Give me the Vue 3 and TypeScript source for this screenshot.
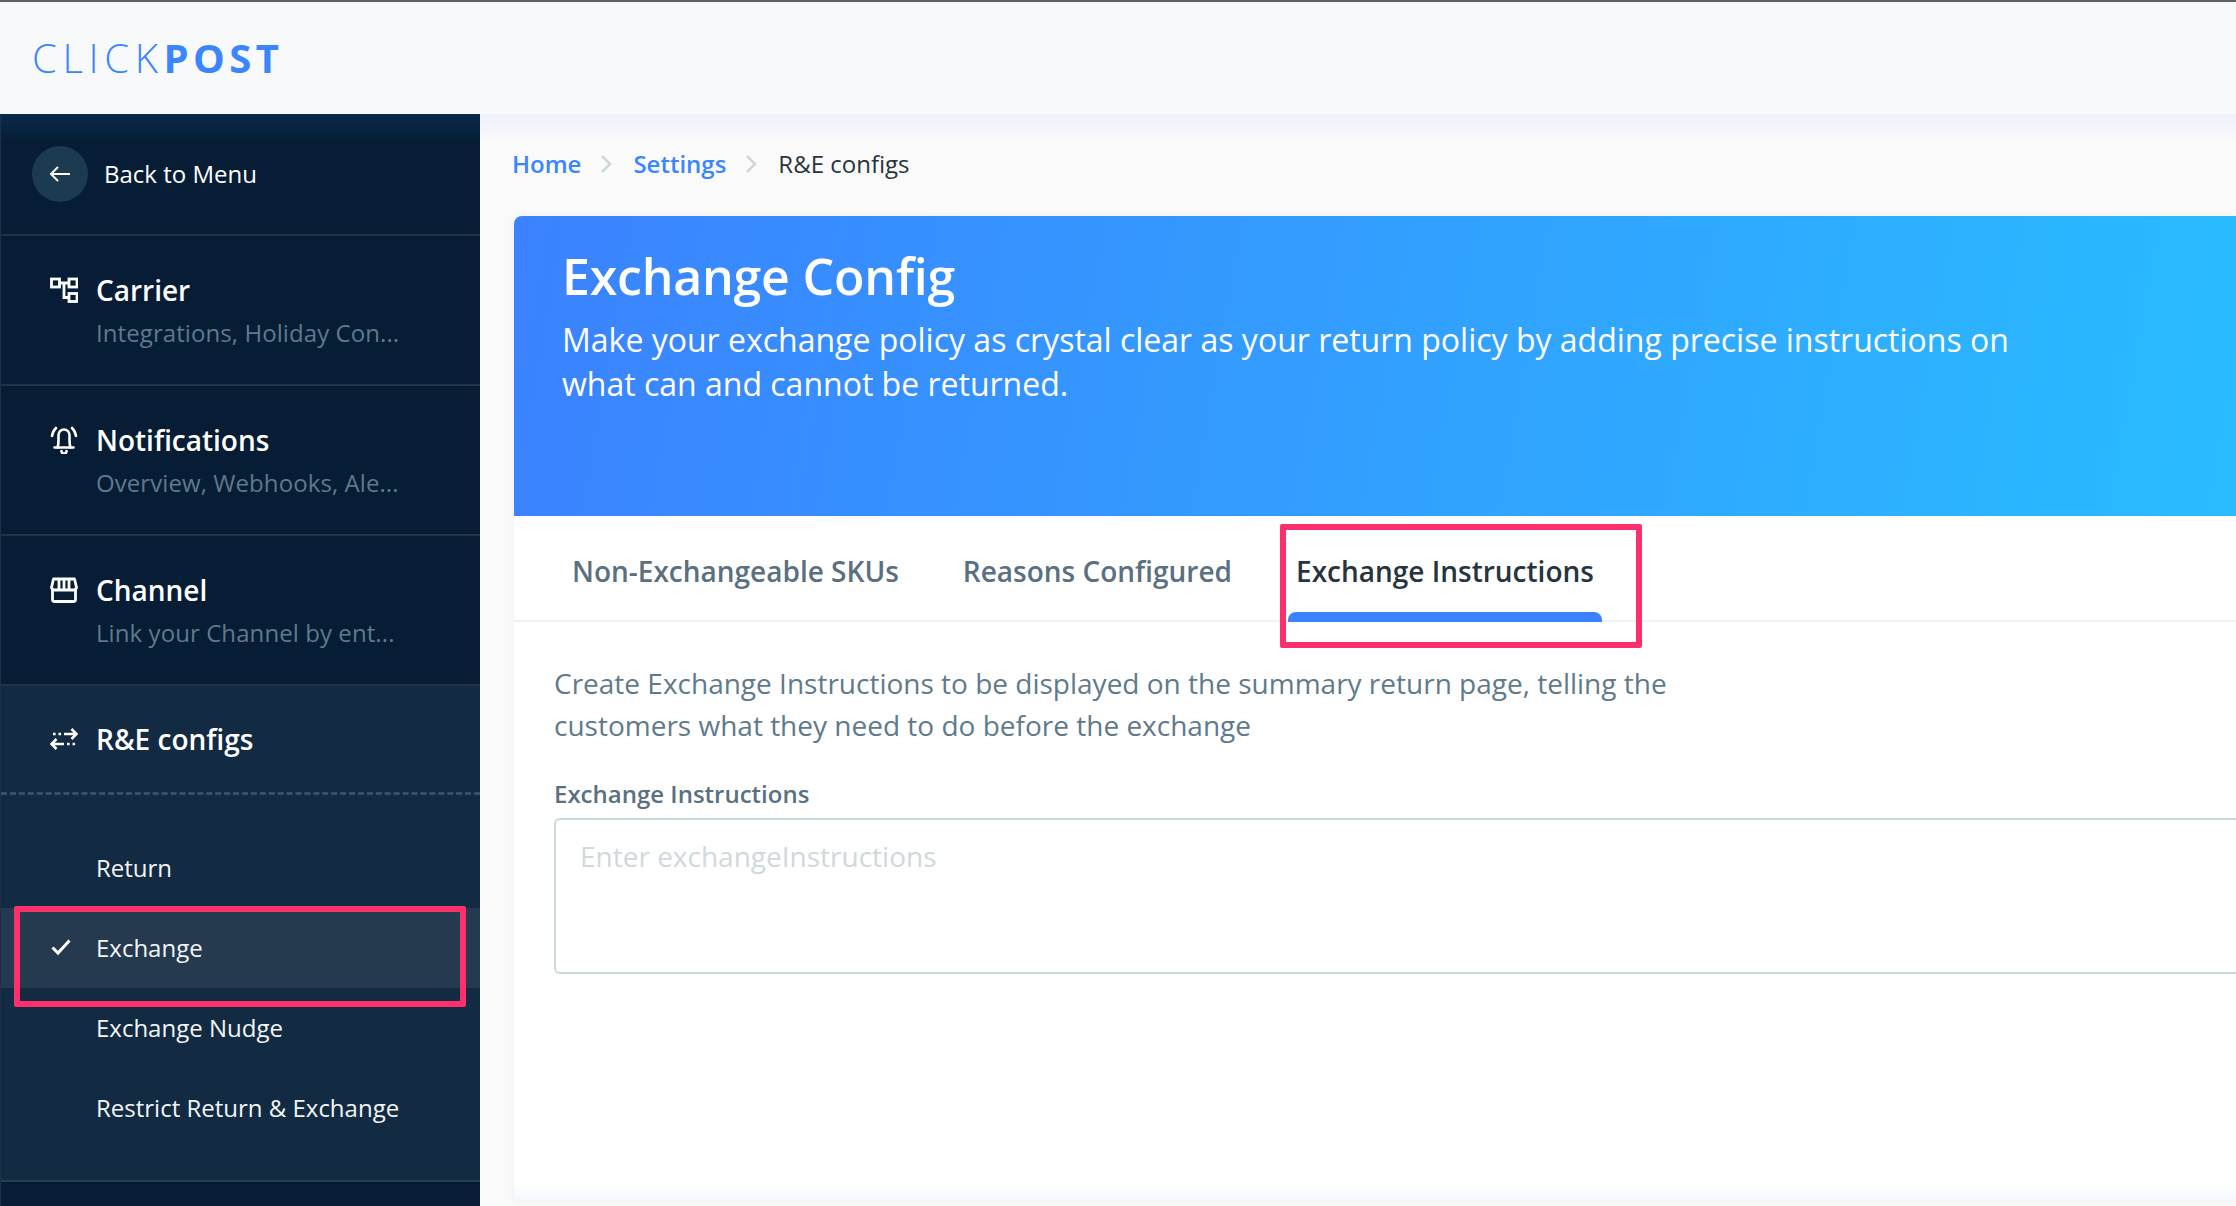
<script setup lang="ts">
interface NavItem { key: string; title: string; sub: string }
const navItems: NavItem[] = [
  { key: 'carrier', title: 'Carrier', sub: 'Integrations, Holiday Con...' },
  { key: 'bell', title: 'Notifications', sub: 'Overview, Webhooks, Ale...' },
  { key: 'store', title: 'Channel', sub: 'Link your Channel by ent...' },
]
const subItems = [
  { label: 'Return', active: false },
  { label: 'Exchange', active: true },
  { label: 'Exchange Nudge', active: false },
  { label: 'Restrict Return & Exchange', active: false },
]
const tabs = [
  { label: 'Non-Exchangeable SKUs', active: false },
  { label: 'Reasons Configured', active: false },
  { label: 'Exchange Instructions', active: true },
]
</script>

<template>
  <div class="page">
    <header class="topbar">
      <div class="logo"><span class="logo-light">CLICK</span><span class="logo-bold">POST</span></div>
    </header>
    <div class="body">
      <aside class="sidebar">
        <div class="back">
          <span class="back-circle">
            <svg width="24" height="24" viewBox="0 0 24 24" fill="none" stroke="#fff" stroke-width="2">
              <path d="M22 12H3M10 5l-7 7 7 7" />
            </svg>
          </span>
          <span class="back-label">Back to Menu</span>
        </div>
        <div v-for="item in navItems" :key="item.key" class="nav">
          <span class="nav-icon">
            <svg v-if="item.key === 'carrier'" width="28" height="26" viewBox="0 0 28 26" fill="none" stroke="#fff" stroke-width="2.8">
              <rect x="1.500" y="2" width="8" height="8" />
              <rect x="19" y="2" width="8" height="8" />
              <rect x="19" y="16.500" width="8" height="8" />
              <path d="M9.500 6H19M14 6v14.500h5" />
            </svg>
            <svg v-else-if="item.key === 'bell'" width="28" height="28" viewBox="0 0 28 28" fill="none" stroke="#fff" stroke-width="2.600" stroke-linecap="round" stroke-linejoin="round">
              <path d="M7.500 21.500c.8-2 1-4 1-7.500V9a5.500 5.500 0 0 1 11 0V14c0 3.500.2 5.500 1 7.500" />
              <path d="M4.500 21.500h19" />
              <path d="M11.500 25a2.500 2.500 0 0 0 5 0" />
              <path d="M6 2C3.800 4 2.600 6.800 2 10M22 2c2.200 2 3.400 4.800 4 8" />
            </svg>
            <svg v-else width="28" height="26" viewBox="0 0 28 26" fill="none" stroke="#fff" stroke-width="2.800" stroke-linejoin="round">
              <path d="M3.500 2h21l2 8.500a3 3 0 0 1-3 2.500h-19a3 3 0 0 1-3-2.500z" />
              <path d="M9 2.500V12M14 2.500V12M19 2.500V12" />
              <path d="M2.500 11v11.500a2 2 0 0 0 2 2h19a2 2 0 0 0 2-2V11" />
            </svg>
          </span>
          <div class="nav-text">
            <div class="nav-title">{{ item.title }}</div>
            <div class="nav-sub">{{ item.sub }}</div>
          </div>
        </div>
        <div class="group">
          <div class="group-head">
            <span class="nav-icon group-icon">
              <svg width="28" height="24" viewBox="0 0 28 24" fill="none" stroke="#fff" stroke-width="2.600">
                <path d="M14 7h12M21.500 2l5 5-5 5" />
                <path d="M3 7h2.600M8.500 7h2.600" />
                <path d="M14 17H2M6.500 12l-5 5 5 5" />
                <path d="M17 17h2.600M22.500 17h2.600" />
              </svg>
            </span>
            <span class="nav-title">R&amp;E configs</span>
          </div>
          <div class="sublist">
            <div v-for="sub in subItems" :key="sub.label" class="sub" :class="{ 'sub-active': sub.active }">
              <svg v-if="sub.active" class="check" width="20" height="18" viewBox="0 0 20 18" fill="none" stroke="#fff" stroke-width="3">
                <path d="M1.500 9.500l5.500 5.500L18.500 2.500" />
              </svg>
              <span>{{ sub.label }}</span>
            </div>
          </div>
        </div>
        <div class="mark mark-side"></div>
      </aside>
      <main class="main">
        <nav class="crumbs">
          <a class="crumb-link">Home</a>
          <svg class="chev" width="12" height="20" viewBox="0 0 12 20" fill="none" stroke="#ccd8d8" stroke-width="2.500"><path d="M2 2l8 8-8 8" /></svg>
          <a class="crumb-link">Settings</a>
          <svg class="chev" width="12" height="20" viewBox="0 0 12 20" fill="none" stroke="#ccd8d8" stroke-width="2.500"><path d="M2 2l8 8-8 8" /></svg>
          <span class="crumb-now">R&amp;E configs</span>
        </nav>
        <section class="card">
          <div class="hero">
            <h1 class="hero-title">Exchange Config</h1>
            <p class="hero-text">Make your exchange policy as crystal clear as your return policy by adding precise instructions on what can and cannot be returned.</p>
          </div>
          <div class="tabs">
            <div v-for="tab in tabs" :key="tab.label" class="tab" :class="{ 'tab-active': tab.active }">
              {{ tab.label }}
              <span v-if="tab.active" class="tab-bar"></span>
              <span v-if="tab.active" class="mark mark-tab"></span>
            </div>
          </div>
          <div class="content">
            <p class="desc">Create Exchange Instructions to be displayed on the summary return page, telling the customers what they need to do before the exchange</p>
            <label class="field-label">Exchange Instructions</label>
            <textarea class="field" placeholder="Enter exchangeInstructions"></textarea>
          </div>
        </section>
      </main>
    </div>
  </div>
</template>

<style>
html, body { margin: 0; padding: 0; overflow: hidden; background: #fafafa; }
</style>

<style scoped>
.page {
  width: 2236px;
  height: 1206px;
  display: flex;
  flex-direction: column;
  overflow: hidden;
  font-family: "Open Sans", "Noto Sans", sans-serif;
  background: #fafafa;
}
.topbar {
  height: 114px;
  flex: none;
  box-sizing: border-box;
  border-top: 2px solid #5f6062;
  background: #f8f9fb;
  display: flex;
  align-items: center;
  padding: 0 0 1px 32px;
}
.logo { font-size: 40px; color: #3b86ff; line-height: 1; }
.logo-light { font-weight: 300; letter-spacing: 5.6px; }
.logo-bold { font-weight: 700; letter-spacing: 4.4px; }
.body { flex: 1; display: flex; min-height: 0; }
.sidebar {
  position: relative;
  width: 480px;
  flex: none;
  background: #061d35;
  border-left: 1px solid #1d3046;
  box-sizing: border-box;
  color: #fff;
}
.back {
  height: 122px;
  box-sizing: border-box;
  display: flex;
  align-items: center;
  padding-left: 31px;
  gap: 16px;
  border-bottom: 2px solid #1f3347;
  background: linear-gradient(#0b2a4a 0, #061d35 28px);
}
.back-circle {
  width: 56px;
  height: 56px;
  border-radius: 50%;
  background: #1c3a50;
  display: flex;
  align-items: center;
  justify-content: center;
}
.back-label { font-size: 24px; line-height: 32px; }
.nav {
  height: 150px;
  box-sizing: border-box;
  display: flex;
  padding: 35px 0 0 49px;
  border-bottom: 2px solid #1f3347;
}
.nav-icon { width: 46px; flex: none; display: flex; height: 38px; align-items: center; }
.nav-title { font-size: 28px; font-weight: 600; line-height: 38px; }
.nav-sub { font-size: 24px; line-height: 32px; color: #5f7a8c; margin-top: 8px; letter-spacing: .08px; }
.group { background: #122b42; border-bottom: 2px solid #2a3c51; }
.group-head {
  height: 109px;
  box-sizing: border-box;
  display: flex;
  align-items: center;
  padding: 0 0 0 49px;
  border-bottom: 3px dashed #34506a;
}
.sublist { padding: 33px 0 32px; }
.sub {
  position: relative;
  height: 80px;
  box-sizing: border-box;
  display: flex;
  align-items: center;
  padding: 0 0 2px 95px;
  font-size: 24px;
  color: #f2f5f7;
}
.sub-active { background: #25394f; }
.check { position: absolute; left: 50px; top: 30px; }
.mark {
  position: absolute;
  box-sizing: border-box;
  border: 6px solid #fe2f6d;
  border-radius: 2px;
  pointer-events: none;
}
.mark-side { left: 13px; top: 792px; width: 452px; height: 101px; }
.main {
  position: relative;
  flex: 1;
  min-width: 0;
  padding: 0 0 5px 34px;
  box-sizing: border-box;
  display: flex;
  flex-direction: column;
  background: linear-gradient(#edf1fb 0, #fafafa 28px);
}
.crumbs {
  height: 102px;
  flex: none;
  box-sizing: border-box;
  display: flex;
  align-items: center;
  font-size: 24px;
  padding-bottom: 3px;
  margin-left: -2px;
}
.crumb-link { color: #3b86ff; font-weight: 600; }
.crumb-now { color: #27343d; }
.chev { margin: 0 21px 0 19px; }
.card {
  flex: 1;
  background: linear-gradient(to top, #f4f6fd 0, #fff 18px);
  border-radius: 8px 0 0 0;
  box-shadow: 0 0 10px rgba(0, 0, 0, .05);
  display: flex;
  flex-direction: column;
  min-height: 0;
}
.hero {
  height: 300px;
  flex: none;
  box-sizing: border-box;
  padding: 30px 180px 0 48px;
  background: linear-gradient(100deg, #3b82ff 0%, #29bcff 100%);
  border-radius: 8px 0 0 0;
  color: #fff;
}
.hero-title { margin: 0; font-size: 50px; font-weight: 600; line-height: 60px; letter-spacing: -.2px; }
.hero-text { margin: 12px 0 0; font-size: 32px; line-height: 44px; }
.tabs {
  height: 106px;
  flex: none;
  box-sizing: border-box;
  display: flex;
  align-items: center;
  padding: 6px 0 0 58px;
  gap: 64px;
  border-bottom: 2px solid #f0f1f3;
}
.tab {
  position: relative;
  font-size: 28px;
  font-weight: 600;
  color: #5a7080;
  line-height: 40px;
}
.tab-active { color: #27343d; }
.tab-bar {
  position: absolute;
  left: -8px;
  right: -8px;
  top: 61px;
  height: 10px;
  background: #3b82ff;
  border-radius: 8px 8px 0 0;
}
.mark-tab { left: -16px; right: -48px; top: -27px; height: 124px; }
.content { padding: 40px 0 0 40px; }
.desc {
  margin: 0;
  font-size: 28px;
  line-height: 42px;
  color: #5f7a8c;
  max-width: 1130px;
}
.field-label {
  display: block;
  margin-top: 32px;
  font-size: 24px;
  font-weight: 600;
  line-height: 32px;
  color: #5a7080;
}
.field {
  display: block;
  margin-top: 8px;
  width: 1800px;
  height: 156px;
  box-sizing: border-box;
  border: 2px solid #ccd8d8;
  border-radius: 6px;
  padding: 17px 24px;
  font: 28px/38px "Open Sans", "Noto Sans", sans-serif;
  resize: none;
  outline: none;
  background: #fff;
}
.field::placeholder { color: #cfd9dc; opacity: 1; }
</style>
